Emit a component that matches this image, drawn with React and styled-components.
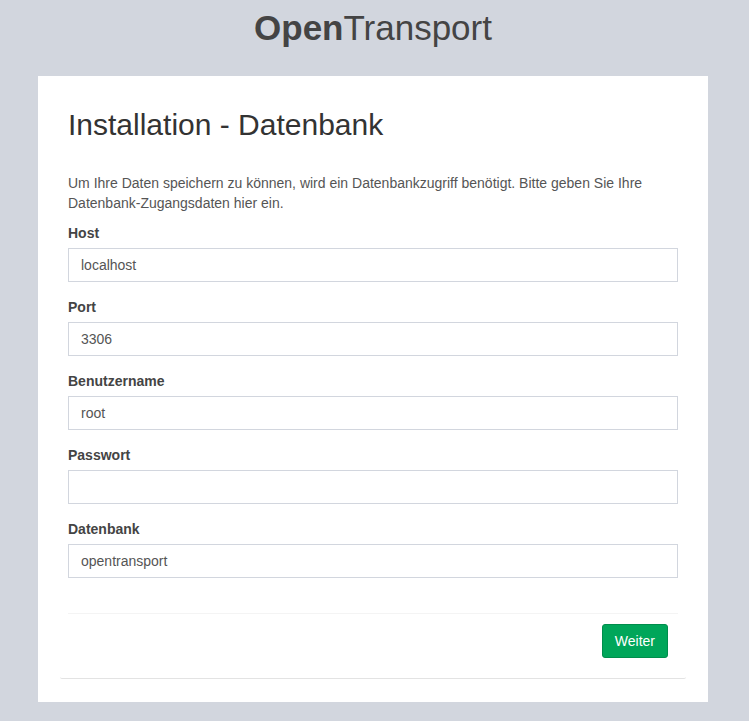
import styled, { createGlobalStyle } from 'styled-components';

const GlobalStyle = createGlobalStyle`
  html, body {
    margin: 0;
    padding: 0;
    background: #d2d6de;
    font-family: "Liberation Sans", Arial, sans-serif;
    font-size: 14px;
    line-height: 20px;
    color: #444;
  }
  * {
    box-sizing: border-box;
  }
`;

const fields = [
  { id: 'host', label: 'Host', value: 'localhost' },
  { id: 'port', label: 'Port', value: '3306' },
  { id: 'user', label: 'Benutzername', value: 'root' },
  { id: 'pass', label: 'Passwort', value: '', type: 'password' },
  { id: 'db', label: 'Datenbank', value: 'opentransport' },
];

export default function App() {
  return (
    <Page>
      <GlobalStyle />
      <Logo>
        <b>Open</b>Transport
      </Logo>
      <Card>
        <Box>
          <Title>Installation - Datenbank</Title>
          <Intro>
            Um Ihre Daten speichern zu können, wird ein Datenbankzugriff benötigt. Bitte geben Sie Ihre
            Datenbank-Zugangsdaten hier ein.
          </Intro>
          {fields.map(f => (
            <FormGroup key={f.id}>
              <Label htmlFor={f.id}>{f.label}</Label>
              <Input id={f.id} type={f.type || 'text'} defaultValue={f.value} />
            </FormGroup>
          ))}
          <Footer>
            <Button type="button">Weiter</Button>
          </Footer>
        </Box>
      </Card>
    </Page>
  );
}

const Page = styled.div`
  width: 670px;
  margin: 0 auto;
  position: relative;
  left: -1.5px;
`;

const Logo = styled.div`
  text-align: center;
  font-size: 35px;
  line-height: 38px;
  color: #444;
  padding: 9px 0 29px;
  b {
    font-weight: 700;
  }
`;

const Card = styled.div`
  background: #fff;
  padding: 32px 22px 23px;
`;

const Box = styled.div`
  padding: 0 8px;
  border-bottom: 1px solid #e3e3e3;
  border-radius: 2px;
`;

const Title = styled.h1`
  margin: 0;
  font-size: 30px;
  line-height: 33px;
  font-weight: 400;
  color: #333;
`;

const Intro = styled.p`
  margin: 32px 0 10px;
  color: #555;
`;

const FormGroup = styled.div`
  margin-bottom: 15px;
`;

const Label = styled.label`
  display: block;
  font-weight: 700;
  margin-bottom: 5px;
  color: #444;
`;

const Input = styled.input`
  display: block;
  width: 100%;
  height: 34px;
  padding: 6px 12px;
  font-family: inherit;
  font-size: 14px;
  color: #555;
  border: 1px solid #d2d6de;
  border-radius: 0;
  outline: none;
`;

const Footer = styled.div`
  margin-top: 35px;
  border-top: 1px solid #f4f4f4;
  padding: 10px 10px 20px;
  display: flex;
  justify-content: flex-end;
`;

const Button = styled.button`
  height: 34px;
  padding: 6px 12px;
  font-family: inherit;
  font-size: 14px;
  line-height: 20px;
  color: #fff;
  background: #00a65a;
  border: 1px solid #008d4c;
  border-radius: 3px;
  cursor: pointer;
`;
